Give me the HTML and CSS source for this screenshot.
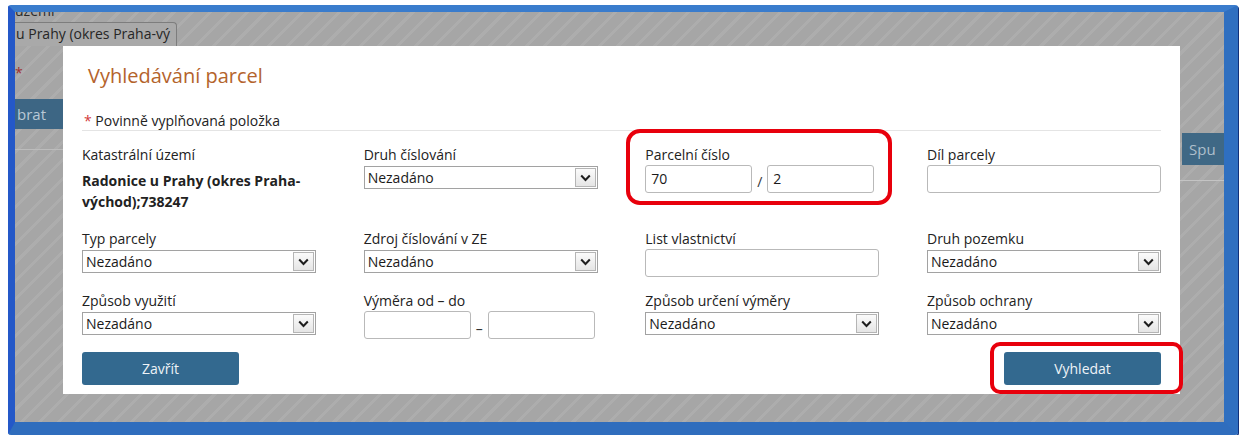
FILE: index.html
```html
<!DOCTYPE html>
<html lang="cs">
<head>
<meta charset="utf-8">
<title>Vyhledávání parcel</title>
<link rel="stylesheet" href="styles.css">
</head>
<body>
<div class="frame">
  <div class="screen">
    <div class="page">
      <div class="page-left">
        <div class="page-label">území</div>
        <div class="page-tab">u Prahy (okres Praha-vý</div>
        <div class="page-req">*</div>
        <div class="page-btn">brat</div>
        <div class="page-rule"></div>
      </div>
      <div class="page-right">
        <div class="page-btn page-btn-right">Spu</div>
        <div class="page-rule page-rule-right"></div>
      </div>
    </div>

    <div class="modal">
      <h1 class="modal-title">Vyhledávání parcel</h1>
      <div class="modal-body">
        <div class="note"><span class="req">*</span> Povinně vyplňovaná položka</div>
        <div class="grid">
          <div class="field">
            <div class="label">Katastrální území</div>
            <div class="value">Radonice u Prahy (okres Praha-<br>východ);738247</div>
          </div>
          <div class="field">
            <div class="label">Druh číslování</div>
            <div class="select"><span class="select-text">Nezadáno</span><span class="arrow"><svg width="11" height="8" viewBox="0 0 11 8"><path d="M1.2 1.5 L5.5 6 L9.8 1.5" fill="none" stroke="#1e1e1e" stroke-width="2"/></svg></span></div>
          </div>
          <div class="field">
            <div class="label">Parcelní číslo</div>
            <div class="pair">
              <div class="input input-half">70</div>
              <span class="sep">/</span>
              <div class="input input-half">2</div>
            </div>
          </div>
          <div class="field">
            <div class="label">Díl parcely</div>
            <div class="input"></div>
          </div>

          <div class="field">
            <div class="label">Typ parcely</div>
            <div class="select"><span class="select-text">Nezadáno</span><span class="arrow"><svg width="11" height="8" viewBox="0 0 11 8"><path d="M1.2 1.5 L5.5 6 L9.8 1.5" fill="none" stroke="#1e1e1e" stroke-width="2"/></svg></span></div>
          </div>
          <div class="field">
            <div class="label">Zdroj číslování v ZE</div>
            <div class="select"><span class="select-text">Nezadáno</span><span class="arrow"><svg width="11" height="8" viewBox="0 0 11 8"><path d="M1.2 1.5 L5.5 6 L9.8 1.5" fill="none" stroke="#1e1e1e" stroke-width="2"/></svg></span></div>
          </div>
          <div class="field">
            <div class="label">List vlastnictví</div>
            <div class="input"></div>
          </div>
          <div class="field">
            <div class="label">Druh pozemku</div>
            <div class="select"><span class="select-text">Nezadáno</span><span class="arrow"><svg width="11" height="8" viewBox="0 0 11 8"><path d="M1.2 1.5 L5.5 6 L9.8 1.5" fill="none" stroke="#1e1e1e" stroke-width="2"/></svg></span></div>
          </div>

          <div class="field">
            <div class="label">Způsob využití</div>
            <div class="select"><span class="select-text">Nezadáno</span><span class="arrow"><svg width="11" height="8" viewBox="0 0 11 8"><path d="M1.2 1.5 L5.5 6 L9.8 1.5" fill="none" stroke="#1e1e1e" stroke-width="2"/></svg></span></div>
          </div>
          <div class="field">
            <div class="label">Výměra od – do</div>
            <div class="pair">
              <div class="input input-half"></div>
              <span class="sep sep-dash">–</span>
              <div class="input input-half"></div>
            </div>
          </div>
          <div class="field">
            <div class="label">Způsob určení výměry</div>
            <div class="select"><span class="select-text">Nezadáno</span><span class="arrow"><svg width="11" height="8" viewBox="0 0 11 8"><path d="M1.2 1.5 L5.5 6 L9.8 1.5" fill="none" stroke="#1e1e1e" stroke-width="2"/></svg></span></div>
          </div>
          <div class="field">
            <div class="label">Způsob ochrany</div>
            <div class="select"><span class="select-text">Nezadáno</span><span class="arrow"><svg width="11" height="8" viewBox="0 0 11 8"><path d="M1.2 1.5 L5.5 6 L9.8 1.5" fill="none" stroke="#1e1e1e" stroke-width="2"/></svg></span></div>
          </div>
        </div>
        <div class="actions">
          <button class="btn">Zavřít</button>
          <button class="btn">Vyhledat</button>
        </div>
      </div>
    </div>

    <div class="mark mark-parcel"></div>
    <div class="mark mark-search"></div>
  </div>
</div>
</body>
</html>
```

FILE: styles.css
```css
* { box-sizing: border-box; }

html, body {
  margin: 0;
  padding: 0;
  background: #ffffff;
}

body {
  font-family: "Open Sans", "Noto Sans", "Liberation Sans", sans-serif;
  font-size: 14px;
  color: #222;
  padding: 5px 0 0 8px;
}

.frame {
  width: 1230px;
  height: 430px;
  border-style: solid;
  border-width: 7px 14px 13px 7px;
  border-color: #3a7ccc #2f6fc0 #2f6dbd #2458c8;
  border-radius: 3px;
  box-shadow: 1px 1px 0 #10307a, inset 0 0 0 1px #1c4fa8;
}

.screen {
  position: relative;
  width: 1209px;
  height: 410px;
  overflow: hidden;
  background-color: #a7a7a7;
  background-image: repeating-linear-gradient(135deg, #a6a6a6 0, #a6a6a6 7px, #adadad 7px, #adadad 10px, #a6a6a6 10px, #a6a6a6 13px);
}

/* background page (dimmed behind the dialog) */
.page {
  display: flex;
  justify-content: space-between;
}

.page-left {
  display: flex;
  flex-direction: column;
  align-items: flex-start;
  width: 200px;
}

.page-label {
  margin-top: -10px;
  line-height: 18px;
  font-size: 14px;
  color: #2a2a2a;
}

.page-tab {
  margin-top: 2px;
  height: 24px;
  padding: 0 6px 0 1px;
  line-height: 22px;
  font-size: 14px;
  color: #262626;
  border: 1px solid #7d7d7d;
  border-left: none;
  border-bottom: none;
  border-radius: 0 4px 0 0;
  background: #a9a9a9;
}

.page-req {
  margin-top: 18px;
  line-height: 18px;
  color: #a0302e;
  font-size: 14px;
}

.page-btn {
  margin-top: 17px;
  width: 48px;
  height: 30px;
  line-height: 30px;
  padding-left: 2px;
  font-size: 15px;
  color: #b9c9d6;
  background: #3d6684;
}

.page-rule {
  margin-top: 20px;
  width: 100%;
  height: 1px;
  background: #bcbcbc;
}

.page-right {
  display: flex;
  flex-direction: column;
  align-items: flex-end;
  width: 60px;
  padding-top: 121px;
}

.page-btn-right {
  margin-top: 0;
  width: 60px;
  height: 32px;
  line-height: 32px;
  padding-left: 7px;
  margin-right: -18px;
  background: #3f6885;
  color: #aebfcc;
}

.page-rule-right {
  margin-top: 15px;
  width: 60px;
  background: #c4c4c4;
}

/* dialog */
.modal {
  position: absolute;
  left: 48px;
  top: 34px;
  width: 1117px;
  height: 348px;
  background: #ffffff;
}

.modal-title {
  margin: 0;
  padding: 17px 0 0 25px;
  font-size: 20px;
  line-height: 26px;
  font-weight: normal;
  color: #b4632c;
}

.modal-body {
  padding: 0 0 0 19px;
  width: 1098px;
}

.note {
  margin-top: 23px;
  padding-left: 2px;
  line-height: 18px;
  height: 19px;
  border-bottom: 1px solid #e4e4e4;
  color: #222;
}

.req {
  color: #d23a3a;
}

.grid {
  margin-top: 14px;
  width: 1079px;
  display: grid;
  grid-template-columns: repeat(4, 234px);
  justify-content: space-between;
  row-gap: 14px;
}

.field {
  display: flex;
  flex-direction: column;
}

.label {
  line-height: 20px;
  height: 20px;
  color: #222;
  white-space: nowrap;
}

.value {
  margin-top: 5px;
  padding-bottom: 3px;
  font-weight: bold;
  line-height: 21px;
  color: #222;
  white-space: nowrap;
}

.select {
  margin-top: 1px;
  height: 23px;
  border: 1px solid #a2a2a2;
  display: flex;
  align-items: stretch;
  background: #fff;
}

.select-text {
  flex: 1;
  padding-left: 3px;
  line-height: 21px;
  color: #1a1a1a;
}

.arrow {
  width: 21px;
  margin: 1px;
  border: 1px solid #b5b5b5;
  background: linear-gradient(#fbfbfb, #e5e5e5);
  display: flex;
  align-items: center;
  justify-content: center;
}

.input {
  height: 28px;
  border: 1px solid #b9b9b9;
  border-radius: 3px;
  padding-left: 5px;
  line-height: 26px;
  color: #1a1a1a;
  background: #fff;
}

.pair {
  display: flex;
  align-items: center;
}

.input-half {
  width: 107px;
}

.sep {
  width: 15px;
  text-align: center;
  padding-top: 4px;
  color: #333;
}

.sep-dash {
  width: 17px;
  padding-top: 6px;
}

.actions {
  margin-top: 13px;
  width: 1079px;
  display: flex;
  justify-content: space-between;
}

.btn {
  width: 157px;
  height: 33px;
  border: none;
  border-radius: 3px;
  background: #33698f;
  color: #eef3f7;
  font-family: inherit;
  font-size: 14px;
  padding: 0;
}

/* red annotation outlines */
.mark {
  position: absolute;
  border: 4px solid #e8000c;
}

.mark-parcel {
  left: 611px;
  top: 117px;
  width: 266px;
  height: 76px;
  border-radius: 14px;
}

.mark-search {
  left: 975px;
  top: 330px;
  width: 193px;
  height: 52px;
  border-radius: 10px;
}
```
